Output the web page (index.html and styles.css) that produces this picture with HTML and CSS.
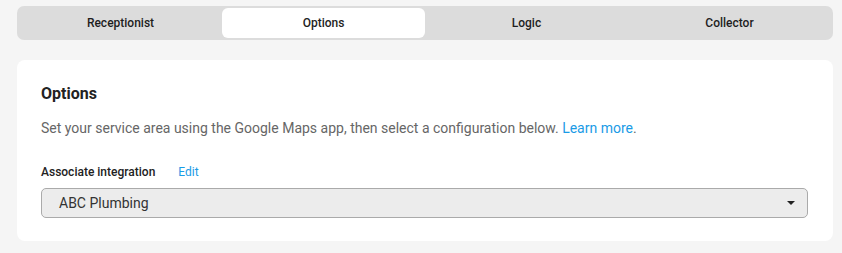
FILE: index.html
```html
<!DOCTYPE html>
<html>
<head>
<meta charset="utf-8">
<link rel="stylesheet" href="styles.css">
</head>
<body>
<div class="page">
  <nav class="tabs">
    <div class="tab">Receptionist</div>
    <div class="tab active">Options</div>
    <div class="tab">Logic</div>
    <div class="tab">Collector</div>
  </nav>
  <section class="card">
    <h2 class="title">Options</h2>
    <p class="desc">Set your service area using the Google Maps app, then select a configuration below. <a class="link" href="#">Learn more</a>.</p>
    <div class="label-row">
      <span class="label">Associate integration</span>
      <a class="link edit" href="#">Edit</a>
    </div>
    <div class="select">
      <span class="select-value">ABC Plumbing</span>
      <span class="caret"></span>
    </div>
  </section>
</div>
</body>
</html>
```
FILE: styles.css
```css
* { box-sizing: border-box; }
html, body { margin: 0; padding: 0; }
body {
  background: #f5f5f5;
  font-family: Roboto, "Liberation Sans", sans-serif;
  color: #222;
}
.page {
  padding: 6px 9px 0 17px;
  display: flex;
  flex-direction: column;
  gap: 20px;
}
.tabs {
  display: grid;
  grid-template-columns: repeat(4, 1fr);
  background: #dcdcdc;
  border-radius: 7px;
  padding: 2px;
  height: 34px;
}
.tab {
  display: flex;
  align-items: center;
  justify-content: center;
  font-size: 12px;
  font-weight: 500;
  color: #1e1e1e;
  border-radius: 6px;
}
.tab.active { background: #fff; }
.card {
  background: #fff;
  border-radius: 8px;
  padding: 24px 24px 23px 24px;
  height: 181px;
}
.title {
  margin: 0;
  font-size: 16px;
  font-weight: 700;
  line-height: 19px;
  color: #222;
}
.desc {
  margin: 15px 0 0;
  font-size: 14px;
  line-height: 20px;
  color: #666;
}
.link { color: #1a9be6; text-decoration: none; }
.label-row {
  margin-top: 26px;
  display: flex;
  gap: 23px;
  font-size: 12px;
  line-height: 16px;
}
.label { font-weight: 500; color: #222; }
.select {
  margin-top: 8px;
  width: 767px;
  height: 30px;
  background: #ececec;
  border: 1px solid #aaa;
  border-radius: 5px;
  display: flex;
  align-items: center;
  justify-content: space-between;
  padding: 0 12px 0 17px;
}
.select-value { font-size: 14px; color: #333; }
.caret {
  width: 0; height: 0;
  border-left: 4px solid transparent;
  border-right: 4px solid transparent;
  border-top: 4px solid #222;
}
```
